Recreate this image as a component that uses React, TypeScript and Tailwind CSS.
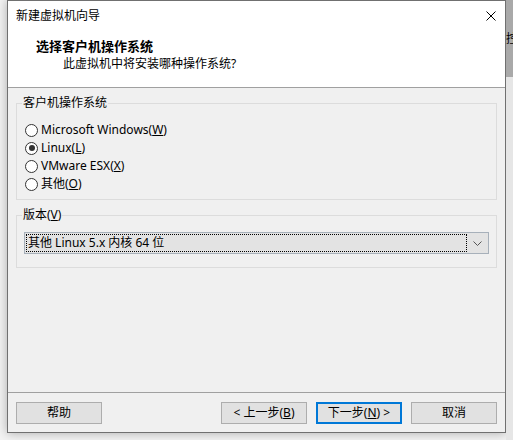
import type { ReactNode } from "react";

const font = "font-['Microsoft_YaHei_UI','Noto_Sans','Noto_Sans_CJK_SC',sans-serif]";

function Radio({ checked, children }: { checked?: boolean; children: ReactNode }) {
  return (
    <label className="flex h-[18px] items-center">
      <span className="flex h-[13px] w-[13px] items-center justify-center rounded-full border border-[#333] bg-white">
        {checked && <span className="h-[6px] w-[6px] rounded-full bg-[#333]" />}
      </span>
      <span className="ml-[3px] text-[12px] leading-[16px] text-black">{children}</span>
    </label>
  );
}

function Btn({ children, primary }: { children: ReactNode; primary?: boolean }) {
  return (
    <button
      className={
        primary
          ? "flex h-[22px] w-[86px] items-center justify-center border-2 border-[#0078d7] bg-[#e1e1e1] text-[12px] text-black"
          : "flex h-[22px] w-[86px] items-center justify-center border border-[#adadad] bg-[#e1e1e1] text-[12px] text-black"
      }
    >
      {children}
    </button>
  );
}

export default function App() {
  return (
    <div className={`${font} flex h-[440px] w-[513px] overflow-hidden bg-[#f3f3f3]`}>
      <div className="w-[7px] shrink-0" />

      {/* wizard window */}
      <div className="flex h-[433px] w-[499px] shrink-0 flex-col border border-[#707070] bg-[#f0f0f0] shadow-[0_0_10px_rgba(0,0,0,0.3)]">
        <div className="flex h-[29px] items-center justify-between bg-white pl-[8px] pr-[9px]">
          <span className="text-[12px] leading-[16px] text-black">新建虚拟机向导</span>
          <svg width="10" height="10" viewBox="0 0 10 10" className="mr-[0px]">
            <path d="M0.5 0.5 L9.5 9.5 M9.5 0.5 L0.5 9.5" stroke="#000" strokeWidth="1" />
          </svg>
        </div>

        <div className="h-[58px] border-b border-[#a0a0a0] bg-white pt-[8px]">
          <div className="pl-[28px] text-[13px] font-bold leading-[17px] text-black">选择客户机操作系统</div>
          <div className="mt-[1px] pl-[55px] text-[12px] leading-[16px] text-black">此虚拟机中将安装哪种操作系统?</div>
        </div>

        <div className="flex-1 px-[8px] pt-[7px]">
          <fieldset className="border border-[#dcdcdc] px-0 pb-[6px] pt-[10px]">
            <legend className="ml-[5px] px-[1px] text-[12px] leading-[16px] text-black">客户机操作系统</legend>
            <div className="pl-[8px]">
              <Radio>
                Microsoft Windows(<u>W</u>)
              </Radio>
              <Radio checked>
                Linux(<u>L</u>)
              </Radio>
              <Radio>
                VMware ESX(<u>X</u>)
              </Radio>
              <Radio>
                其他(<u>O</u>)
              </Radio>
            </div>
          </fieldset>

          <fieldset className="mt-[7px] border border-[#dcdcdc] px-0 pb-[13px] pt-[9px]">
            <legend className="ml-[5px] px-[1px] text-[12px] leading-[16px] text-black">
              版本(<u>V</u>)
            </legend>
            <div className="pl-[7px]">
              <div className="flex h-[22px] w-[465px] items-center border border-[#a7b0ba] bg-[#e3e3e3] p-[1px]">
                <div className="flex h-full flex-1 items-center border border-dotted border-black pl-[1px] text-[12px] leading-[16px] text-black">
                  其他 Linux 5.x 内核 64 位
                </div>
                <div className="flex w-[20px] items-center justify-center">
                  <svg width="9" height="5" viewBox="0 0 9 5">
                    <path d="M0.5 0.5 L4.5 4.5 L8.5 0.5" fill="none" stroke="#555" strokeWidth="1" />
                  </svg>
                </div>
              </div>
            </div>
          </fieldset>
        </div>

        <div className="flex h-[40px] items-start border-t border-[#a0a0a0] px-[8px] pt-[9px]">
          <Btn>帮助</Btn>
          <div className="flex-1" />
          <div className="flex gap-[9px]">
            <Btn>
              &lt; 上一步(<u>B</u>)
            </Btn>
            <Btn primary>
              下一步(<u>N</u>) &gt;
            </Btn>
            <Btn>取消</Btn>
          </div>
        </div>
      </div>

      {/* window behind */}
      <div className="flex flex-1 flex-col">
        <div className="h-[77px] overflow-hidden bg-[#a9a9a9] pt-[32px]">
          <span className="block w-[12px] text-[12px] leading-[14px] text-black">控</span>
        </div>
        <div className="flex-1 bg-[#e6e6e6]" />
      </div>
    </div>
  );
}
